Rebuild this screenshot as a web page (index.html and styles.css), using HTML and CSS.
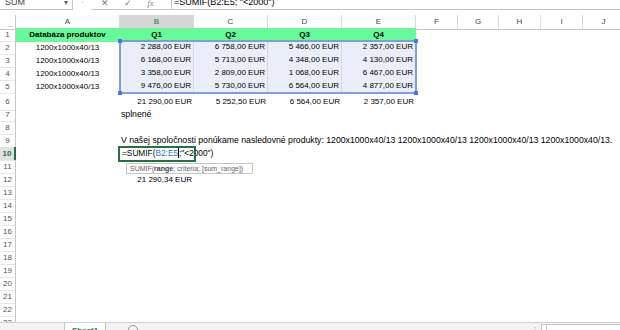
FILE: index.html
```html
<!DOCTYPE html>
<html lang="sk">
<head>
    <meta charset="UTF-8">
    <meta name="viewport" content="width=device-width, initial-scale=1.0">
    <title>Zošit1 - Excel</title>
    <link rel="stylesheet" href="styles.css">
</head>
<body>
    <div class="app">
        <!-- riadok vzorcov (zobrazený len spodok) -->
        <div class="formula-bar">
            <div class="fb-row">
                <div class="name-box"><span>SUM</span><span class="drop">&#9662;</span></div>
                <div class="fb-grip">&#8942;</div>
                <div class="fb-buttons">
                    <span class="fb-btn">&#10005;</span>
                    <span class="fb-btn">&#10003;</span>
                    <span class="fb-btn fx"><i>f</i>x</span>
                </div>
                <div class="fb-input">=SUMIF(B2:E5; "&lt;2000")</div>
            </div>
        </div>

        <div class="sheet">
            <div class="row head">
                <span class="corner"><span class="tri"></span></span>
                <span>A</span><span class="cur">B</span><span>C</span><span>D</span><span>E</span>
                <span>F</span><span>G</span><span>H</span><span>I</span><span>J</span>
            </div>

            <div class="body">
                <div class="row">
                    <span class="rh">1</span>
                    <span class="c green bold center">Databáza produktov</span>
                    <span class="c green bold center">Q1</span>
                    <span class="c green bold center">Q2</span>
                    <span class="c green bold center">Q3</span>
                    <span class="c green bold center">Q4</span>
                </div>
                <div class="row">
                    <span class="rh">2</span>
                    <span class="c center">1200x1000x40/13</span>
                    <span class="c sel num">2 288,00 EUR</span>
                    <span class="c sel num">6 758,00 EUR</span>
                    <span class="c sel num">5 466,00 EUR</span>
                    <span class="c sel num">2 357,00 EUR</span>
                </div>
                <div class="row">
                    <span class="rh">3</span>
                    <span class="c center">1200x1000x40/13</span>
                    <span class="c sel num">6 168,00 EUR</span>
                    <span class="c sel num">5 713,00 EUR</span>
                    <span class="c sel num">4 348,00 EUR</span>
                    <span class="c sel num">4 130,00 EUR</span>
                </div>
                <div class="row">
                    <span class="rh">4</span>
                    <span class="c center">1200x1000x40/13</span>
                    <span class="c sel num">3 358,00 EUR</span>
                    <span class="c sel num">2 809,00 EUR</span>
                    <span class="c sel num">1 068,00 EUR</span>
                    <span class="c sel num">6 467,00 EUR</span>
                </div>
                <div class="row">
                    <span class="rh">5</span>
                    <span class="c center">1200x1000x40/13</span>
                    <span class="c sel num">9 476,00 EUR</span>
                    <span class="c sel num">5 730,00 EUR</span>
                    <span class="c sel num">6 564,00 EUR</span>
                    <span class="c sel num">4 877,00 EUR</span>
                </div>
                <div class="row tall">
                    <span class="rh">6</span>
                    <span class="c"></span>
                    <span class="c num">21 290,00 EUR</span>
                    <span class="c num">5 252,50 EUR</span>
                    <span class="c num">6 564,00 EUR</span>
                    <span class="c num">2 357,00 EUR</span>
                </div>
                <div class="row">
                    <span class="rh">7</span>
                    <span class="c"></span>
                    <span class="c text">splnené</span>
                </div>
                <div class="row"><span class="rh">8</span></div>
                <div class="row">
                    <span class="rh">9</span>
                    <span class="c"></span>
                    <span class="c text">V našej spoločnosti ponúkame nasledovné produkty: 1200x1000x40/13 1200x1000x40/13 1200x1000x40/13 1200x1000x40/13.</span>
                </div>
                <div class="row">
                    <span class="rh cur">10</span>
                    <span class="c"></span>
                    <span class="c edit">=SUMIF(<span class="ref">B2:E5</span><span class="caret"></span>;"&lt;2000")</span>
                </div>
                <div class="row"><span class="rh">11</span></div>
                <div class="row">
                    <span class="rh">12</span>
                    <span class="c"></span>
                    <span class="c num">21 290,34 EUR</span>
                </div>
                <div class="row"><span class="rh">13</span></div>
                <div class="row"><span class="rh">14</span></div>
                <div class="row"><span class="rh">15</span></div>
                <div class="row"><span class="rh">16</span></div>
                <div class="row"><span class="rh">17</span></div>
                <div class="row"><span class="rh">18</span></div>
                <div class="row"><span class="rh">19</span></div>
                <div class="row"><span class="rh">20</span></div>
                <div class="row"><span class="rh">21</span></div>
                <div class="row"><span class="rh">22</span></div>
                <div class="row"><span class="rh">23</span></div>

                <!-- zvýraznený rozsah B2:E5 -->
                <div class="range">
                    <span class="handle tl"></span><span class="handle tr"></span>
                    <span class="handle bl"></span><span class="handle br"></span>
                </div>
                <!-- aktívna bunka B10 -->
                <div class="active"></div>
                <div class="tip">SUMIF(<b>range</b>; criteria; [sum_range])</div>
            </div>
        </div>

        <div class="tabs">
            <div class="tab-nav"></div>
            <div class="tab">Sheet1</div>
            <div class="tab-add"></div>
            <div class="tab-space"></div>
            <div class="tab-grip">&#8942;</div>
            <div class="hscroll"><span></span></div>
        </div>
    </div>
</body>
</html>
```

FILE: styles.css
```css
html, body {
    margin: 0;
    padding: 0;
    background: #fff;
}
body {
    font-family: "Liberation Sans", Arial, sans-serif;
    font-size: 8px;
    color: #000;
    overflow: hidden;
}
.app {
    width: 620px;
    height: 330px;
    display: flex;
    flex-direction: column;
    overflow: hidden;
}

/* riadok vzorcov */
.formula-bar {
    height: 10px;
    overflow: hidden;
    flex: none;
}
.fb-row {
    display: flex;
    height: 22px;
    margin-top: -12px;
    color: #444;
}
.name-box {
    width: 63px;
    margin-left: 0;
    border: 1px solid #c6c6c6;
    border-left: none;
    display: flex;
    align-items: flex-end;
    justify-content: space-between;
    padding: 0 4px 2px 5px;
    font-size: 9px;
}
.drop {
    color: #666;
    font-size: 8px;
}
.fb-grip {
    width: 18px;
    text-align: center;
    color: #aaa;
    font-size: 9px;
    line-height: 24px;
}
.fb-buttons {
    width: 72px;
    border-bottom: 1px solid #c6c6c6;
    display: flex;
    align-items: flex-end;
    padding-left: 8px;
    padding-bottom: 1px;
    gap: 12px;
    color: #777;
}
.fb-btn {
    width: 11px;
    text-align: center;
    font-size: 9px;
}
.fx {
    font-family: "Liberation Serif", serif;
    font-style: italic;
    color: #888;
}
.fb-input {
    flex: 1;
    border: 1px solid #c6c6c6;
    border-right: none;
    padding: 0 0 2px 2px;
    display: flex;
    align-items: flex-end;
    font-size: 9px;
    color: #000;
}

/* hárok */
.sheet {
    flex: 1;
    overflow: hidden;
    margin-top: 5px;
}
.row {
    display: grid;
    grid-template-columns: 16px 104px 74px 74px 74px 74px 42px 41px 42px 42px 42px;
    height: 13px;
}
.row.tall {
    height: 15px;
}
.head span {
    text-align: center;
    line-height: 13px;
    color: #444;
    border-right: 1px solid #dadada;
    border-bottom: 1px solid #c6c6c6;
    box-sizing: border-box;
}
.head .cur {
    background: #d6d6d6;
    color: #217346;
    border-bottom: 2px solid #217346;
}
.head .corner {
    position: relative;
    border-right: 1px solid #c6c6c6;
}
.tri {
    position: absolute;
    right: 2px;
    bottom: 2px;
    width: 0;
    height: 0;
    border-left: 7px solid transparent;
    border-bottom: 8px solid #d4d4d4;
}
.body {
    position: relative;
}
.rh {
    text-align: center;
    line-height: 13px;
    color: #555;
    border-right: 1px solid #c6c6c6;
    border-bottom: 1px solid #e6e6e6;
    box-sizing: border-box;
}
.tall .rh {
    line-height: 17px;
}
.rh.cur {
    background: #e1e1e1;
    color: #217346;
    font-weight: bold;
    border-right: 2px solid #217346;
}
.c {
    line-height: 13px;
    white-space: nowrap;
    padding: 0 2px 0 1px;
    box-sizing: border-box;
}
.c.text {
    font-size: 8.7px;
}
.tall .c {
    line-height: 17px;
}
.green {
    background: #66fb98;
}
.bold {
    font-weight: bold;
}
.center {
    text-align: center;
}
.num {
    text-align: right;
}
.sel {
    background: #eaeef9;
    border-right: 1px solid #d3d8e6;
    border-bottom: 1px solid #d3d8e6;
    line-height: 12px;
}
.edit {
    padding-left: 2px;
    font-size: 8.3px;
}
.ref {
    color: #3f6fd1;
}
.caret {
    display: inline-block;
    width: 1px;
    height: 11px;
    background: #000;
    vertical-align: -2px;
}

/* prekrytia */
.range {
    position: absolute;
    left: 119px;
    top: 12px;
    width: 298px;
    height: 54px;
    border: 2px solid #7b9de4;
    box-sizing: border-box;
}
.handle {
    position: absolute;
    width: 4px;
    height: 4px;
    background: #4a78dc;
}
.tl { left: -3px; top: -3px; }
.tr { right: -3px; top: -3px; }
.bl { left: -3px; bottom: -3px; }
.br { right: -3px; bottom: -3px; }
.active {
    position: absolute;
    left: 118px;
    top: 118px;
    width: 78px;
    height: 16px;
    border: 2px solid #217346;
    box-sizing: border-box;
}
.tip {
    position: absolute;
    left: 126px;
    top: 135px;
    width: 127px;
    height: 11px;
    box-sizing: border-box;
    border: 1px solid #c6c6c6;
    background: #fff;
    font-size: 7px;
    line-height: 9px;
    color: #666;
    padding-left: 3px;
    white-space: nowrap;
}
.tip b {
    color: #444;
}

/* záložky hárkov */
.tabs {
    height: 7px;
    flex: none;
    display: flex;
    background: #f3f3f3;
    border-top: 1px solid #d0d0d0;
    overflow: hidden;
}
.tab-nav {
    width: 64px;
    border-right: 1px solid #c6c6c6;
}
.tab {
    width: 40px;
    background: #fff;
    border-right: 1px solid #c6c6c6;
    text-align: center;
    color: #217346;
    font-weight: bold;
    font-size: 8px;
    line-height: 16px;
}
.tab-add {
    width: 10px;
    height: 10px;
    margin: 2px 0 0 22px;
    border: 1px solid #999;
    border-radius: 50%;
    box-sizing: border-box;
}
.tab-space {
    flex: 1;
}
.tab-grip {
    width: 10px;
    color: #aaa;
    font-size: 8px;
    line-height: 14px;
}
.hscroll {
    width: 78px;
    border-left: 1px solid #c6c6c6;
    border-top: 1px solid #c6c6c6;
    margin-top: 1px;
    background: #fff;
    display: flex;
}
.hscroll span {
    width: 4px;
    border-right: 1px solid #c6c6c6;
}
```
